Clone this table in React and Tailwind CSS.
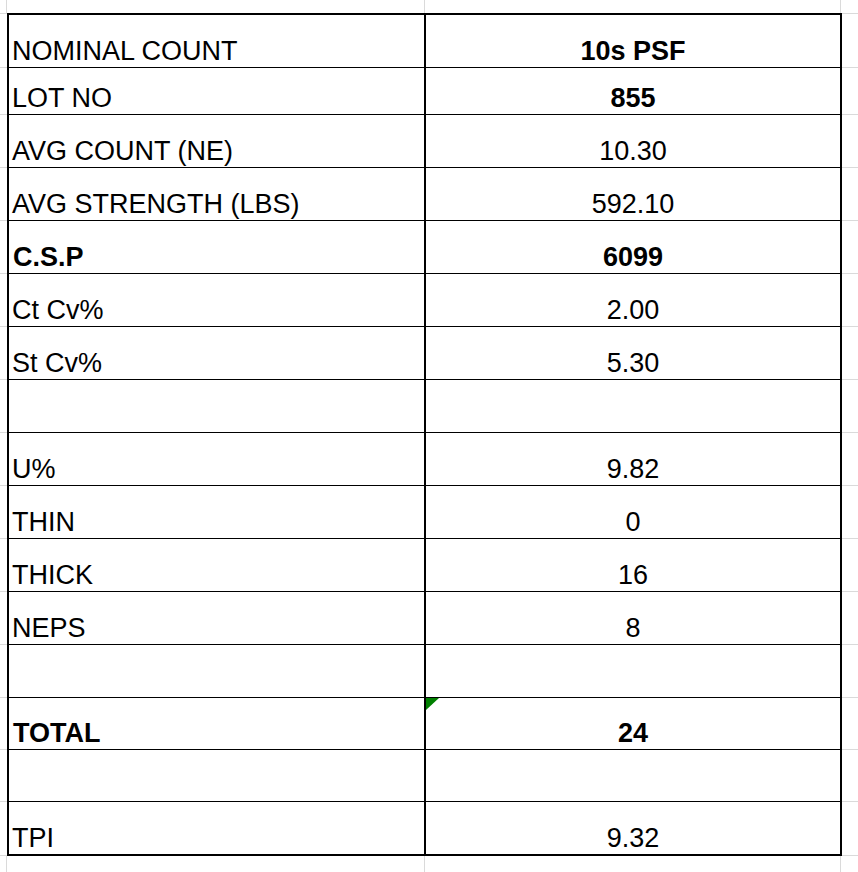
const ROWS = [
  { label: 'NOMINAL COUNT', value: '10s PSF', h: 'h-[55px]', boldValue: true, first: true },
  { label: 'LOT NO', value: '855', h: 'h-[47px]', boldValue: true },
  { label: 'AVG COUNT (NE)', value: '10.30', h: 'h-[53px]' },
  { label: 'AVG STRENGTH (LBS)', value: '592.10', h: 'h-[53px]' },
  { label: 'C.S.P', value: '6099', h: 'h-[53px]', boldLabel: true, boldValue: true },
  { label: 'Ct Cv%', value: '2.00', h: 'h-[53px]' },
  { label: 'St Cv%', value: '5.30', h: 'h-[53px]' },
  { label: '', value: '', h: 'h-[53px]' },
  { label: 'U%', value: '9.82', h: 'h-[54px]' },
  { label: 'THIN', value: '0', h: 'h-[53px]' },
  { label: 'THICK', value: '16', h: 'h-[53px]' },
  { label: 'NEPS', value: '8', h: 'h-[53px]' },
  { label: '', value: '', h: 'h-[53px]' },
  { label: 'TOTAL', value: '24', h: 'h-[52px]', boldLabel: true, boldValue: true, flag: true },
  { label: '', value: '', h: 'h-[52px]' },
  { label: 'TPI', value: '9.32', h: 'h-[54px]', last: true },
];

function Row({ label, value, h, boldLabel, boldValue, first, last, flag }) {
  const bottom = last ? 'border-b-2' : 'border-b';
  const top = first ? 'border-t-2' : '';
  return (
    <div className={`flex ${h}`}>
      <div className={`w-[7px] shrink-0 border-b border-[#dadada] ${first ? 'border-t' : ''}`} />
      <div className={`w-[419px] shrink-0 flex items-end pl-[3px] pb-[1px] border-l-2 border-r-2 border-black ${bottom} ${top}`}>
        <span className={`leading-[30px] whitespace-nowrap ${boldLabel ? 'font-bold pl-[1px]' : ''}`}>{label}</span>
      </div>
      <div className={`relative w-[416px] shrink-0 flex items-end justify-center pb-[1px] border-r-2 border-black ${bottom} ${top}`}>
        {flag && (
          <svg className="absolute left-0 top-0" width="13" height="12" viewBox="0 0 13 12">
            <polygon points="0,0 13,0 0,12" fill="#008000" />
          </svg>
        )}
        <span className={`leading-[30px] whitespace-nowrap ${boldValue ? 'font-bold' : ''}`}>{value}</span>
      </div>
      <div className={`flex-1 border-b border-[#dadada] ${first ? 'border-t' : ''}`} />
    </div>
  );
}

function Spacer({ h }) {
  return (
    <div className={`flex ${h}`}>
      <div className="w-[7px] shrink-0 border-r border-[#dadada]" />
      <div className="w-[418px] shrink-0 border-r border-[#dadada]" />
      <div className="w-[416px] shrink-0 border-r border-[#dadada]" />
      <div className="flex-1" />
    </div>
  );
}

export default function App() {
  return (
    <div
      className="w-[858px] h-[872px] bg-white text-black text-[27px] overflow-hidden flex flex-col"
      style={{ fontFamily: '"Liberation Sans", Arial, sans-serif' }}
    >
      <Spacer h="h-[13px]" />
      {ROWS.map((r, i) => (
        <Row key={i} {...r} />
      ))}
      <Spacer h="h-[16px]" />
    </div>
  );
}
